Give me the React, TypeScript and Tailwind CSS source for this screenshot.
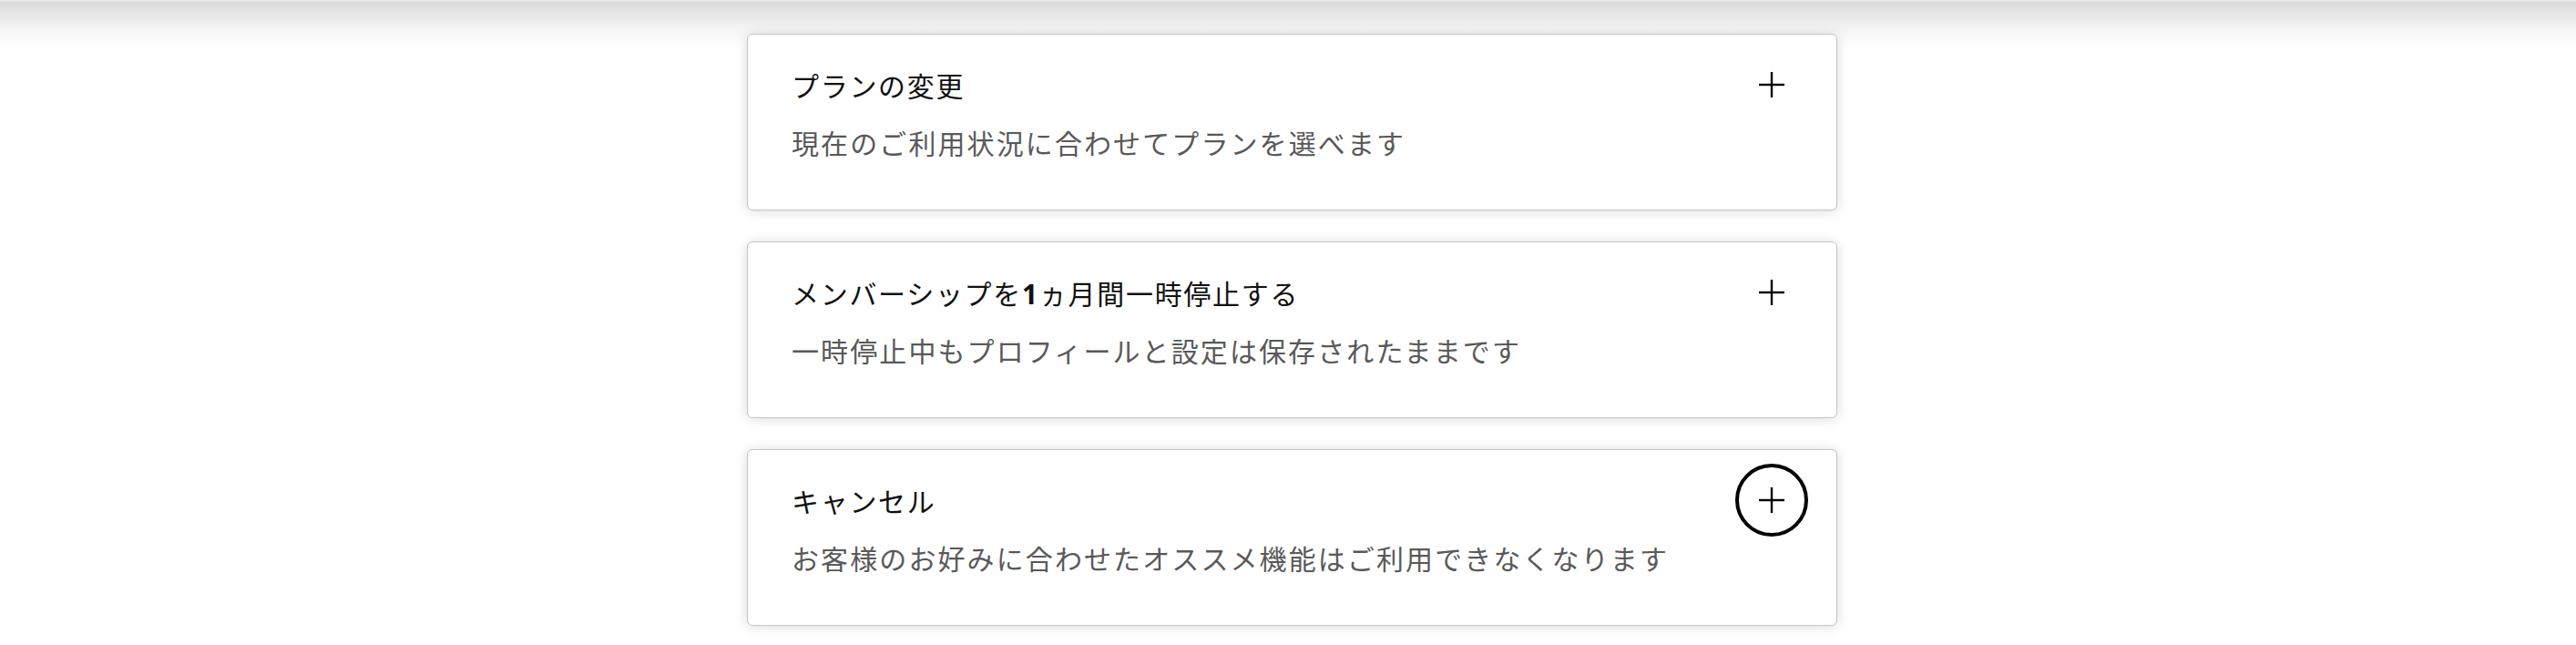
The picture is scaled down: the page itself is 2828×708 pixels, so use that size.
import { Fragment } from "react";

type Option = {
  title: React.ReactNode;
  description: string;
  focused?: boolean;
};

const options: Option[] = [
  {
    title: "プランの変更",
    description: "現在のご利用状況に合わせてプランを選べます",
  },
  {
    title: (
      <Fragment>
        メンバーシップを<span className="font-bold">1</span>ヵ月間一時停止する
      </Fragment>
    ),
    description: "一時停止中もプロフィールと設定は保存されたままです",
  },
  {
    title: "キャンセル",
    description: "お客様のお好みに合わせたオススメ機能はご利用できなくなります",
    focused: true,
  },
];

function PlusIcon() {
  return (
    <svg width="28" height="28" viewBox="0 0 28 28" fill="none" stroke="#000" strokeWidth="2.4">
      <line x1="14" y1="0" x2="14" y2="28" />
      <line x1="0" y1="14" x2="28" y2="14" />
    </svg>
  );
}

function OptionCard({ option }: { option: Option }) {
  return (
    <div className="relative z-10 flex h-[194px] items-start justify-between rounded-[6px] border border-[#c4c4c4] bg-white pl-[48px] pr-[31px] pt-[15px] shadow-[0_1px_14px_rgba(0,0,0,0.14)]">
      <div className="pt-[22px]">
        <div className="text-[30px] leading-[40px] tracking-[1.7px] text-[#111]">
          {option.title}
        </div>
        <div className="mt-[23px] text-[30px] leading-[40px] tracking-[2.1px] text-[#595959]">
          {option.description}
        </div>
      </div>
      <button
        className={
          "flex h-[80px] w-[80px] shrink-0 items-center justify-center rounded-full " +
          (option.focused ? "border-4 border-black" : "border-4 border-transparent")
        }
      >
        <PlusIcon />
      </button>
    </div>
  );
}

export default function App() {
  return (
    <div
      className="relative min-h-[708px] bg-white pl-[9px]"
      style={{ fontFamily: '"Noto Sans", "Noto Sans CJK JP", sans-serif' }}
    >
      {/* ヘッダーの影 */}
      <div className="pointer-events-none absolute inset-x-0 top-0 z-0 h-[54px] bg-[linear-gradient(to_bottom,#ebebeb_0px,#dadada_3px,#ececec_22px,#fafafa_40px,#ffffff_54px)]" />
      <div className="mx-auto flex w-[1197px] flex-col gap-[34px] pt-[37px]">
        {options.map((o, i) => (
          <OptionCard key={i} option={o} />
        ))}
      </div>
    </div>
  );
}
